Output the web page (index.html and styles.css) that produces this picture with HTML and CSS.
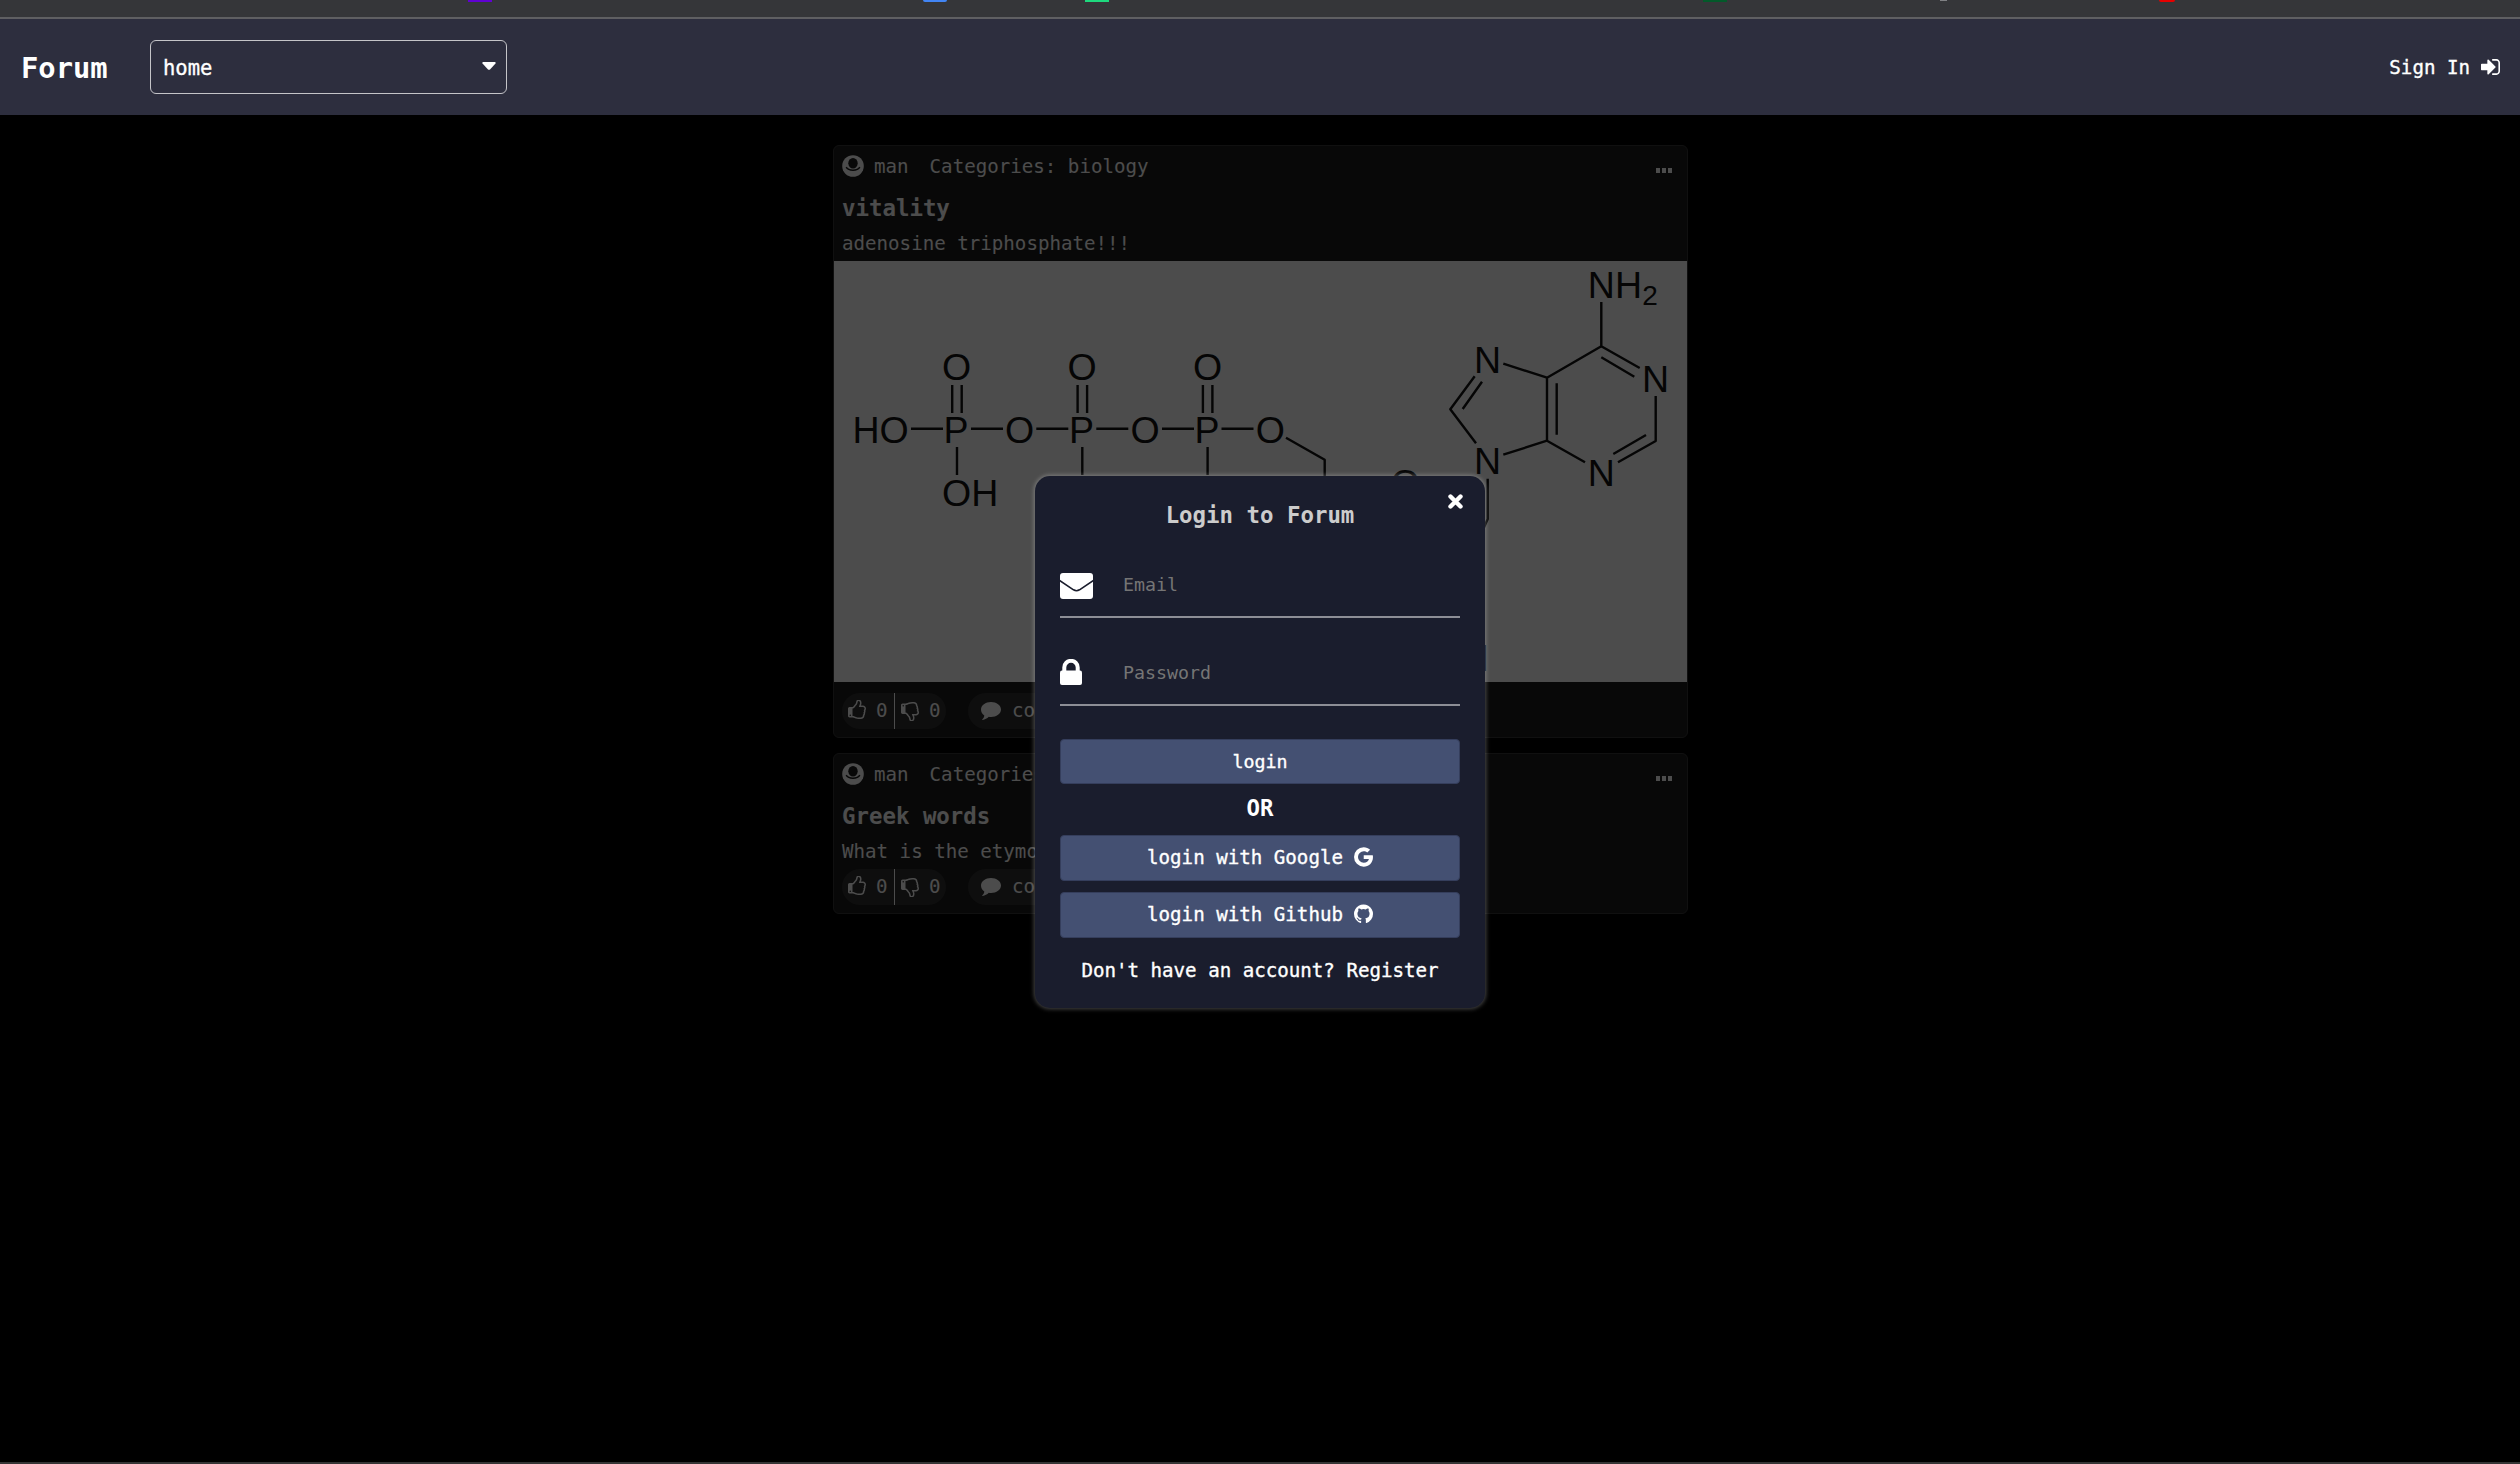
FILE: index.html
```html
<!DOCTYPE html>
<html lang="en">
<head>
<meta charset="utf-8">
<title>Forum</title>
<link rel="stylesheet" href="styles.css">
</head>
<body>
<svg class="defs" width="0" height="0" aria-hidden="true">
  <symbol id="i-up" viewBox="0 128 1536 1536"><path d="M256 1344q0-26-19-45t-45-19-45 19-19 45 19 45 45 19 45-19 19-45zm1152-576q0-51-39-89.500t-89-38.500h-352q0-58 48-159.500t48-160.500q0-98-32-145t-128-47q-26 26-38 85t-30.500 125.500-59.500 109.500q-22 23-77 91-4 5-23 30t-31.500 41-34.500 42.500-40 44-38.500 35.500-40 27-35.500 9h-32v640h32q13 0 31.500 3t33 6.500 38 11 35 11.500 35.500 12.500 29 10.500q211 73 342 73h121q192 0 192-167 0-26-5-56 30-16 47.500-52.500t17.500-73.500-18-69q53-50 53-119 0-25-10-55.500t-25-47.500q32-1 53.500-47t21.500-81zm128-1q0 89-49 163 9 33 9 69 0 77-38 144 3 21 3 43 0 101-60 178 1 139-85 219.500t-227 80.500h-129q-96 0-189.500-22.500t-216.500-65.500q-116-40-138-40h-288q-53 0-90.500-37.500t-37.500-90.500v-640q0-53 37.500-90.500t90.500-37.500h274q36-24 137-155 58-75 107-128 24-25 35.500-85.500t30.500-126.500 62-108q39-37 90-37 84 0 151 32.500t102 101.500 35 186q0 93-48 192h176q104 0 180 76t76 179z"/></symbol>
  <symbol id="i-user" viewBox="0 0 22 22"><circle cx="11" cy="11" r="10.800"/><ellipse class="cut" cx="11" cy="8.300" rx="4.700" ry="5.200"/><path class="cut-line" d="M4.200 12.200Q6 15.300 11 15.300T17.800 12.200"/></symbol>
  <symbol id="i-comment" viewBox="0 0 20 18"><path d="M10 0c5.500 0 10 3.200 10 7.500S15.500 15 10 15c-.8 0-1.500-.1-2.200-.2C6 16.500 4 17.600 1.600 18c-.4 0-.5-.4-.2-.7 1-.9 1.700-2 1.900-3.800C1.300 12.100 0 10 0 7.500 0 3.200 4.500 0 10 0z"/></symbol>
</svg>

<div class="browser">
  <i class="fav purple"></i><i class="fav blue"></i><i class="fav mint"></i><i class="fav green"></i><i class="fav grey"></i><i class="fav red"></i>
</div>

<header class="nav">
  <h1 class="brand">Forum</h1>
  <div class="select"><span>home</span><svg width="14" height="8" viewBox="0 0 14 8"><path d="M1 0h12q1.200.6.500 1.500L8 7.400q-1 .9-2 0L.5 1.500Q-.2.600 1 0z"/></svg></div>
  <a class="signin">Sign In<svg width="19" height="16" viewBox="0 256 1536 1280"><path d="M1184 896q0 26-19 45l-544 544q-19 19-45 19t-45-19-19-45v-288h-448q-26 0-45-19t-19-45v-384q0-26 19-45t45-19h448v-288q0-26 19-45t45-19 45 19l544 544q19 19 19 45zm352-352v704q0 119-84.500 203.500t-203.500 84.500h-320q-13 0-22.500-9.500t-9.500-22.500q0-4-1-20t-.5-26.500 3-23.500 10-19.500 20.500-6.500h320q66 0 113-47t47-113v-704q0-66-47-113t-113-47h-312l-11.500-1-11.500-3-8-5.500-7-9-2-13.500q0-4-1-20t-.5-26.500 3-23.500 10-19.500 20.500-6.500h320q119 0 203.500 84.500t84.500 203.500z"/></svg></a>
</header>

<main class="page">
  <section class="feed">
    <article class="card">
      <div class="meta"><svg class="avatar"><use href="#i-user"/></svg><span class="author">man</span><span>Categories: biology</span><span class="dots"><i></i><i></i><i></i></span></div>
      <h2 class="title">vitality</h2>
      <p class="text">adenosine triphosphate!!!</p>
      <svg class="molecule" viewBox="834 261 853 421">
        <g class="bonds">
          <path d="M911 428.700h32M971 428.700h32M1036.300 428.700h32M1096.300 428.700h32M1162 428.700h32M1221.500 428.700h32"/>
          <path d="M952.200 385v28M961.700 385v28M1077.600 385v28M1087.100 385v28M1202.900 385v28M1212.400 385v28"/>
          <path d="M957 447v28M1082.300 447v28M1207.600 447v28"/>
          <path d="M1286 437.700L1324.700 459.700V490"/>
          <path d="M1601.300 302v44.300L1639.700 368M1601.300 357.300L1634.300 376.700M1655.700 396v45L1618 462.300M1646 435L1613.300 454"/>
          <path d="M1585 462.300L1547 440.700V377.700L1601.300 346.300M1556.700 383.300v51.400M1547 377.700L1503.300 363.700"/>
          <path d="M1474.700 376.300L1450.300 409.300L1476 443.300M1482 381.700L1462.700 409M1503.300 454.700L1547 440.700M1487.700 478.700V519L1482 532"/>
        </g>
        <g class="atoms">
          <text x="852.500" y="443">HO</text><text x="943.600" y="443">P</text><text x="1005.100" y="443">O</text><text x="1069" y="443">P</text><text x="1130.400" y="443">O</text><text x="1194.500" y="443">P</text><text x="1255.700" y="443">O</text>
          <text x="942.100" y="380">O</text><text x="1067.500" y="380">O</text><text x="1192.900" y="380">O</text>
          <text x="942.100" y="505.700">OH</text><text x="1390.700" y="496">O</text><text x="1432.700" y="671">OH</text>
          <text x="1587.800" y="298.300">NH</text><text class="sub" x="1642.300" y="305.300">2</text>
          <text x="1642" y="392.200">N</text><text x="1587.800" y="486.200">N</text><text x="1474" y="372.700">N</text><text x="1474" y="474.300">N</text>
        </g>
      </svg>
      <div class="actions after-image">
        <div class="votes"><span class="vote"><svg><use href="#i-up"/></svg>0</span><span class="vote down"><svg><use href="#i-up"/></svg>0</span></div>
        <div class="comments"><svg><use href="#i-comment"/></svg>comments</div>
      </div>
    </article>

    <article class="card">
      <div class="meta"><svg class="avatar"><use href="#i-user"/></svg><span class="author">man</span><span>Categories</span><span class="dots"><i></i><i></i><i></i></span></div>
      <h2 class="title">Greek words</h2>
      <p class="text">What is the etymology</p>
      <div class="actions">
        <div class="votes"><span class="vote"><svg><use href="#i-up"/></svg>0</span><span class="vote down"><svg><use href="#i-up"/></svg>0</span></div>
        <div class="comments"><svg><use href="#i-comment"/></svg>comments</div>
      </div>
    </article>
  </section>

  <div class="overlay">
    <form class="modal">
      <svg class="close" viewBox="0 0 15 15"><path d="M2.500 2.500l10 10M12.500 2.500l-10 10"/></svg>
      <h2 class="heading">Login to Forum</h2>
      <div class="field email"><svg width="33" height="26" viewBox="0 0 33 26"><rect width="33" height="26" rx="3"/><path class="flap" d="M-1 7L13.500 16.800q3 1.800 6 0L34 7"/></svg><span>Email</span></div>
      <div class="field password"><svg width="22" height="26" viewBox="0 0 22 26"><rect y="11.500" width="22" height="14.500" rx="2"/><path class="shackle" d="M4.300 13V8.500a6.700 6.700 0 0 1 13.400 0V13"/></svg><span>Password</span></div>
      <button class="btn login" type="button">login</button>
      <h3 class="or">OR</h3>
      <button class="btn" type="button">login with Google<svg width="19" height="20" viewBox="3 3 17.500 18"><path d="M20.283 10.356h-8.327v3.451h4.792c-.446 2.193-2.313 3.453-4.792 3.453a5.270 5.270 0 0 1-5.279-5.280 5.270 5.270 0 0 1 5.279-5.279c1.259 0 2.397.447 3.290 1.178l2.600-2.599c-1.584-1.381-3.615-2.233-5.890-2.233a8.908 8.908 0 0 0-8.934 8.934 8.907 8.907 0 0 0 8.934 8.934c4.467 0 8.529-3.249 8.529-8.934 0-.528-.081-1.097-.202-1.625z"/></svg></button>
      <button class="btn" type="button">login with Github<svg width="19" height="20" viewBox="128 128 1536 1536"><path d="M896 128q209 0 385.500 103t279.500 279.500 103 385.500q0 251-146.500 451.500t-378.500 277.500q-27 5-40-7t-13-30q0-3 .5-76.500t.5-134.500q0-97-52-142 57-6 102.500-18t94-39 81-66.500 53-105 20.500-150.500q0-119-79-206 37-91-8-204-28-9-81 11t-92 44l-38 24q-93-26-192-26t-192 26q-16-11-42.500-27t-83.500-38.500-85-13.500q-45 113-8 204-79 87-79 206 0 85 20.500 150t52.500 105 80.500 67 94 39 102.500 18q-39 36-49 103-21 10-45 15t-57 5-65.500-21.500-55.500-62.500q-19-32-48.500-52t-49.500-24l-20-3q-21 0-29 4.500t-5 11.500 9 14 13 12l7 5q22 10 43.500 38t31.500 51l10 23q13 38 44 61.500t67 30 69.500 7 55.500-3.500l23-4q0 38 .5 88.500t.5 54.500q0 18-13 30t-40 7q-232-77-378.500-277.500t-146.500-451.500q0-209 103-385.500t279.500-279.500 385.500-103z"/></svg></button>
      <p class="register">Don't have an account? Register</p>
    </form>
  </div>
</main>
</body>
</html>
```

FILE: styles.css
```css
* { box-sizing: border-box; margin: 0; padding: 0; }
body {
  display: flex;
  flex-direction: column;
  height: 1464px;
  overflow: hidden;
  background: #000;
  color: #fff;
  font: 19.150px/24px "DejaVu Sans Mono", "Liberation Mono", monospace;
}
svg { display: block; flex: none; fill: currentColor; }
.defs { position: absolute; }
.cut { fill: #1b1b1b; }
.cut-line { fill: none; stroke: #1b1b1b; stroke-width: 1.500; }

/* browser chrome strip */
.browser {
  display: flex;
  align-items: flex-start;
  flex: none;
  height: 19px;
  border-bottom: 2px solid #5f5f62;
  background: #353639;
}
.fav { width: 24px; height: 2px; }
.purple { margin-left: 468px; background: #6001d2; }
.blue { margin-left: 431px; background: #4285f4; border-radius: 0 0 2px 2px; }
.mint { margin-left: 138px; background: #1ed97e; }
.green { margin-left: 594px; background: #03592a; }
.grey { width: 7px; height: 1px; margin-left: 213px; background: #808184; }
.red { width: 16px; margin-left: 212px; background: #e60000; border-radius: 0 0 3px 3px; }

.nav {
  display: flex;
  align-items: center;
  flex: none;
  height: 96px;
  padding: 0 20px 0 21px;
  background: #2d2e3e;
}
.brand { width: 129px; font-size: 28.800px; line-height: 34px; padding-top: 2px; }
.select {
  display: flex;
  align-items: center;
  justify-content: space-between;
  width: 357px;
  height: 54px;
  padding: 0 10px 0 12px;
  border: 1px solid #c4c4c8;
  border-radius: 6px;
  font-size: 20.500px;
}
.select span { padding-top: 2px; }
.select svg { margin-top: -2px; }
.select, .signin, .btn, .register { -webkit-text-stroke: .35px #fff; }
.signin { display: flex; align-items: center; gap: 11px; margin-left: auto; padding-top: 1px; }
.signin svg { margin-top: -2px; }

.page { position: relative; flex: 1; border-bottom: 2px solid #353535; }
.feed {
  display: flex;
  flex-direction: column;
  gap: 15px;
  width: 855px;
  margin: 0 auto;
  padding-top: 30px;
  position: relative;
  left: .5px;
}
.card {
  border: 1px solid #383838;
  border-radius: 6px;
  background: #1b1b1b;
  padding: 8px 0;
}
.meta { display: flex; align-items: center; height: 25px; padding: 0 15px 0 8px; }
.avatar { width: 22px; height: 22px; margin: -1px 10px 0 0; }
.author { margin-right: 21px; }
.dots { display: flex; gap: 2px; margin: 7px 0 0 auto; }
.dots i { width: 4px; height: 5px; background: #fff; }
.title { margin-top: 15px; padding-left: 8px; font-size: 22.400px; line-height: 28px; }
.text { height: 25px; margin-top: 10px; padding-left: 8px; line-height: 24px; }
.molecule { width: 853px; height: 421px; margin-top: 4px; background: #fff; }
.bonds { fill: none; stroke: #111; stroke-width: 2.400; stroke-linejoin: round; }
.atoms { fill: #111; font: 37.500px "Liberation Sans", Arial, sans-serif; }
.sub { font-size: 28px; }

.actions { display: flex; gap: 22px; height: 36px; margin: 4px 0 0 8px; }
.after-image { margin-top: 11px; }
.votes, .comments { display: flex; align-items: center; border-radius: 18px; background: #303030; }
.vote { display: flex; align-items: center; height: 36px; width: 52px; padding-left: 6px; gap: 10px; }
.vote svg { width: 18px; height: 20px; margin-top: -3px; }
.down { border-left: 1px solid #fff; }
.down svg { transform: scaleY(-1); margin-top: -1px; }
.comments { gap: 11px; padding: 0 14px 0 13px; }
.comments svg { width: 20px; height: 18px; }

.overlay { position: absolute; inset: 0; background: rgba(0, 0, 0, .7); }
.modal {
  position: absolute;
  left: 1035px;
  top: 361px;
  width: 450px;
  height: 532px;
  display: flex;
  flex-direction: column;
  padding: 24px 25px;
  border-radius: 15px;
  background: #1a1d2d;
  box-shadow: 0 0 4px 1px rgba(255, 255, 255, .28);
}
.close { position: absolute; right: 22px; top: 18px; width: 15px; height: 15px; }
.close path { fill: none; stroke: #fff; stroke-width: 4.400; stroke-linecap: round; }
.heading { color: #ccc; font-size: 22.400px; line-height: 30px; text-align: center; }
.field {
  display: flex;
  align-items: center;
  flex: none;
  height: 88px;
  border-bottom: 2px solid #8d8e96;
  color: #757575;
  font-size: 18.300px;
}
.field svg { color: #fff; }
.email { padding-top: 26px; }
.email span { margin: -3px 0 0 30px; }
.password { padding-top: 22px; }
.password span { margin: 2px 0 0 41px; }
.flap { fill: none; stroke: #1a1d2d; stroke-width: 1.600; }
.shackle { fill: none; stroke: #fff; stroke-width: 4; }
.btn {
  display: flex;
  align-items: center;
  justify-content: center;
  gap: 11px;
  flex: none;
  height: 46px;
  margin-bottom: 11px;
  border: 1px solid #353e5c;
  border-radius: 4px;
  background: #445072;
  color: #fff;
  font: inherit;
}
.btn svg { margin-top: -3px; }
.login { height: 45px; margin: 33px 0 0; font-size: 18.300px; }
.or { flex: none; height: 51px; font-size: 22.400px; line-height: 49px; text-align: center; }
.register { margin-top: 10px; text-align: center; white-space: nowrap; }
```
